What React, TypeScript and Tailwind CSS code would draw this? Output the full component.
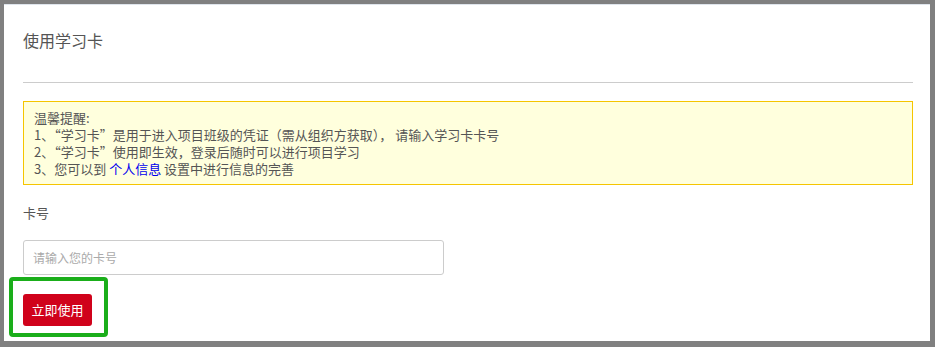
const cjk = { fontFamily: '"Microsoft YaHei", "Noto Sans CJK SC", "Liberation Sans", sans-serif' }

export default function App() {
  return (
    <div className="w-[935px] h-[347px] bg-[#808080] pt-[4px] pl-[4px] pr-[5px] pb-[6px]" style={cjk}>
      <div className="h-full bg-white border-t border-[#dfe5ec] px-[19px] pr-[17px]">
        <div className="mt-[25px] text-[16px] leading-[20px] text-[#555]">使用学习卡</div>
        <div className="mt-[32px] h-px bg-[#cccccc]" />

        <div className="mt-[18px] border border-[#f5c500] bg-[#ffffdd] px-[10px] py-[7px] text-[13px] leading-[17px] text-[#555]">
          <div>温馨提醒:</div>
          <div>1、“学习卡”是用于进入项目班级的凭证（需从组织方获取）， 请输入学习卡卡号</div>
          <div>2、“学习卡”使用即生效，登录后随时可以进行项目学习</div>
          <div>
            3、您可以到 <a className="text-[#0000ee]">个人信息</a> 设置中进行信息的完善
          </div>
        </div>

        <div className="mt-[18px] text-[13px] leading-[20px] text-[#555]">卡号</div>

        <input
          className="mt-[17px] block w-[421px] h-[35px] border border-[#cccccc] rounded-[3px] px-[9px] text-[12px] text-[#555] placeholder:text-[#aaaaaa] outline-none"
          placeholder="请输入您的卡号"
        />

        <div className="relative mt-[19px] w-[69px]">
          <button className="w-[69px] h-[32px] rounded-[3px] bg-[#d0021b] text-white text-[13px]">立即使用</button>
          <div className="absolute left-[-14px] top-[-17px] w-[99px] h-[60px] border-[4px] border-[#1aae1a] rounded-[4px] pointer-events-none" />
        </div>
      </div>
    </div>
  )
}
